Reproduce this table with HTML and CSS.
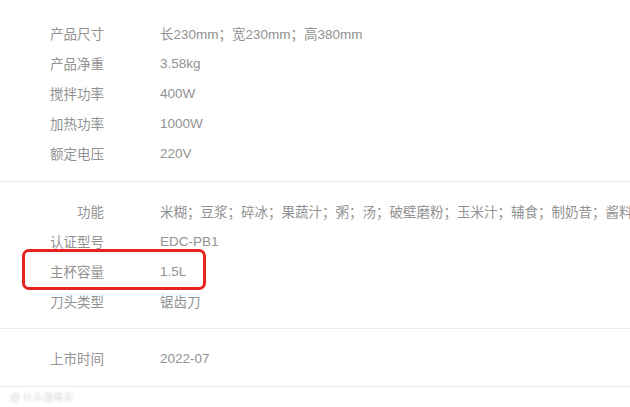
FILE: index.html
```html
<!DOCTYPE html>
<html lang="zh-CN">
<head>
    <meta charset="UTF-8">
    <meta name="viewport" content="width=device-width, initial-scale=1.0">
    <title>产品参数</title>
    <link rel="stylesheet" href="styles.css">
</head>
<body>
    <div class="spec-list">
        <div class="spec-group first">
            <div class="spec-row"><span class="spec-label">产品尺寸</span><span class="spec-value">长230mm；宽230mm；高380mm</span></div>
            <div class="spec-row"><span class="spec-label">产品净重</span><span class="spec-value">3.58kg</span></div>
            <div class="spec-row"><span class="spec-label">搅拌功率</span><span class="spec-value">400W</span></div>
            <div class="spec-row"><span class="spec-label">加热功率</span><span class="spec-value">1000W</span></div>
            <div class="spec-row"><span class="spec-label">额定电压</span><span class="spec-value">220V</span></div>
        </div>
        <div class="spec-group">
            <div class="spec-row"><span class="spec-label">功能</span><span class="spec-value">米糊；豆浆；碎冰；果蔬汁；粥；汤；破壁磨粉；玉米汁；辅食；制奶昔；酱料</span></div>
            <div class="spec-row"><span class="spec-label">认证型号</span><span class="spec-value">EDC-PB1</span></div>
            <div class="spec-row"><span class="spec-label">主杯容量</span><span class="spec-value">1.5L</span></div>
            <div class="spec-row"><span class="spec-label">刀头类型</span><span class="spec-value">锯齿刀</span></div>
        </div>
        <div class="spec-group last">
            <div class="spec-row"><span class="spec-label">上市时间</span><span class="spec-value">2022-07</span></div>
        </div>
    </div>
    <div class="watermark">@ 什么值得买</div>

    <!-- highlight drawn over the capacity row -->
    <div class="highlight"></div>
</body>
</html>
```

FILE: styles.css
```css
body {
    margin: 0;
    background-color: white;
    font-family: "Liberation Sans", "Noto Sans CJK SC", sans-serif;
    font-size: 13.5px;
    color: #929292;
    position: relative;
    width: 630px;
    height: 407px;
    overflow: hidden;
}
.spec-list {
    width: 100%;
}
.spec-group {
    padding: 14px 0 12px;
    border-bottom: 1px solid #ebebeb;
}
.spec-group.first {
    padding-top: 18px;
    padding-bottom: 13px;
}
.spec-group.last {
    padding-bottom: 13px;
}
.spec-row {
    display: flex;
    align-items: center;
    height: 30px;
    padding-left: 48px;
    white-space: nowrap;
}
.spec-label {
    width: 56px;
    flex-shrink: 0;
    text-align: right;
    margin-right: 56px;
}
.spec-value {
    flex-shrink: 0;
}
.watermark {
    margin: 2px 0 0 10px;
    font-size: 10px;
    color: #d6d6d6;
    filter: blur(1px);
}
.highlight {
    position: absolute;
    left: 22px;
    top: 249px;
    width: 184px;
    height: 41px;
    box-sizing: border-box;
    border: 3px solid #e8231d;
    border-radius: 7px;
}
```
